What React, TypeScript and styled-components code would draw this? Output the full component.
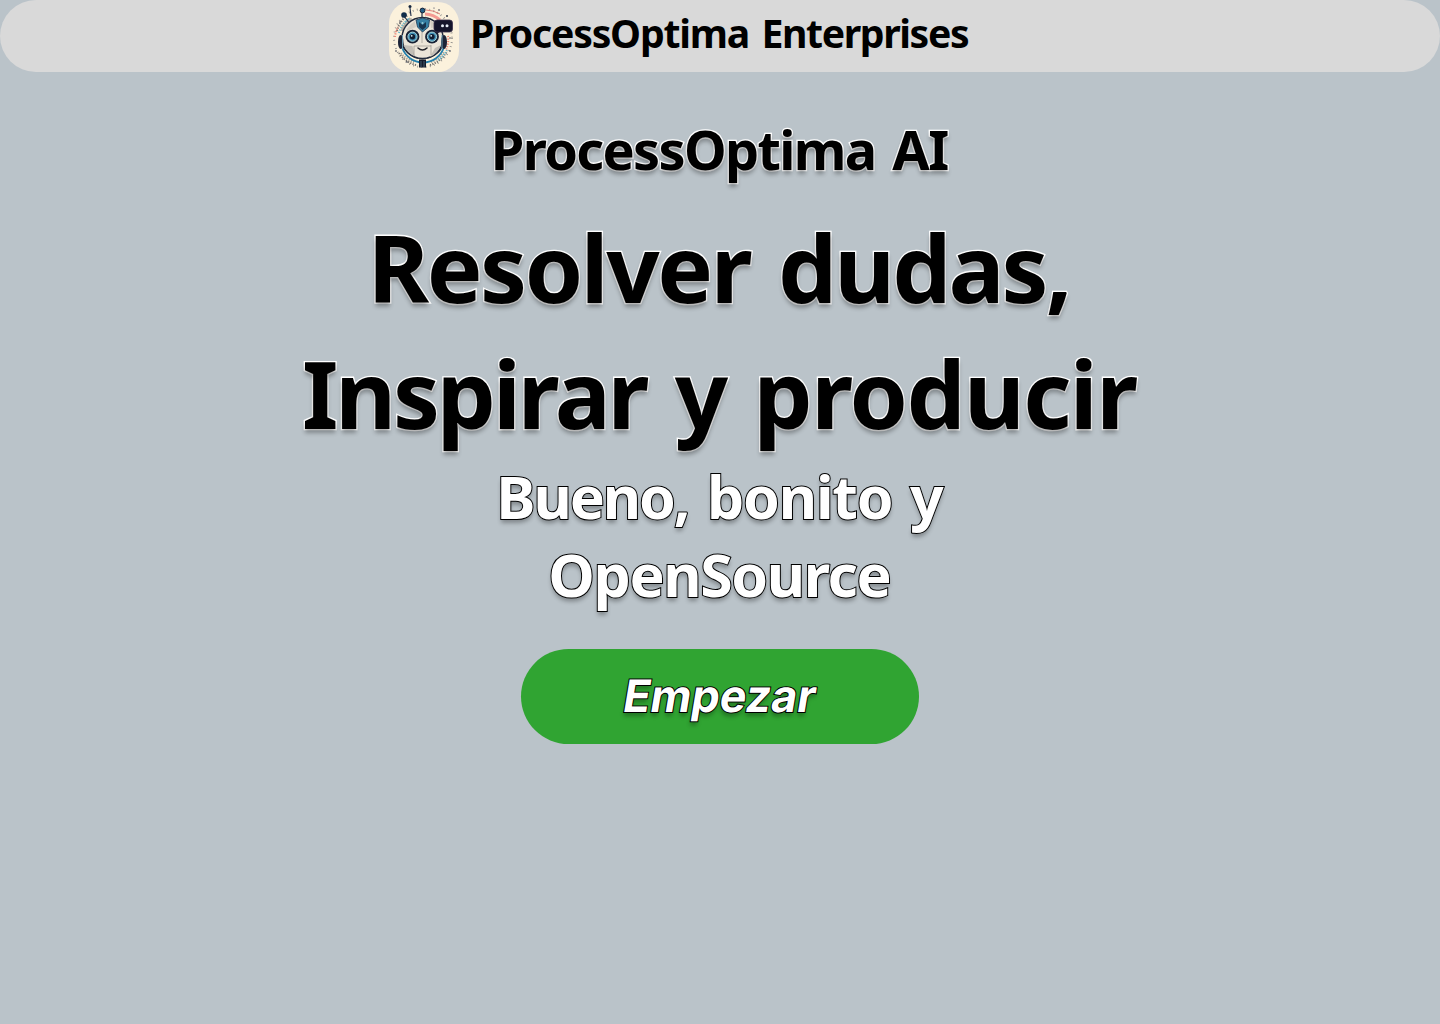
import React from "react";
import styled, { createGlobalStyle } from "styled-components";

const GlobalStyle = createGlobalStyle`
  * { box-sizing: border-box; }
  body { margin: 0; background: #bac3c9; }
`;

const Page = styled.main`
  display: flex;
  flex-direction: column;
  align-items: center;
  width: 1440px;
  height: 1024px;
  overflow: hidden;
  font-family: "Noto Sans", "Open Sans", sans-serif;
  font-weight: 740;
  color: #000;
`;

const Header = styled.header`
  display: flex;
  align-items: flex-start;
  width: 100%;
  height: 72px;
  padding: 2px 0 0 389px;
  gap: 11px;
  border-radius: 36px;
  background: #d9d9d9;
`;

const LogoFrame = styled.svg`
  flex: none;
  width: 70px;
  height: 70px;
`;

const Brand = styled.span`
  font-size: 39.2px;
  line-height: 62px;
  word-spacing: 1px;
  white-space: nowrap;
`;

const Word = styled.span<{ $tracking: number }>`
  letter-spacing: ${(p) => p.$tracking}px;
  margin-right: ${(p) => -p.$tracking}px;
`;

const Line = styled.span<{ $size: number; $height: number; $light?: boolean }>`
  display: block;
  font-size: ${(p) => p.$size}px;
  line-height: ${(p) => p.$height}px;
  word-spacing: 1px;
  color: ${(p) => (p.$light ? "#fff" : "#000")};
  -webkit-text-stroke: ${(p) => (p.$light ? "2px #000" : "2.6px #fff")};
  paint-order: stroke fill;
  text-shadow: 0 4px 4px rgba(0, 0, 0, 0.3);
  white-space: nowrap;
`;

const Product = styled.h2`
  margin: 41px 0 0;
  font-weight: inherit;
`;

const Title = styled.h1`
  margin: 19px 0 0;
  font-weight: inherit;
  text-align: center;
`;

const Tagline = styled.p`
  margin: 1px 0 0;
  text-align: center;
`;

const StartButton = styled.button`
  display: flex;
  align-items: center;
  justify-content: center;
  width: 398px;
  height: 95px;
  margin-top: 36px;
  padding: 0 0 2px;
  border: 0;
  border-radius: 48px;
  background: #30a432;
  font-family: Inter, sans-serif;
  font-weight: 700;
`;

const Slanted = styled.span`
  display: block;
  transform: skewX(-9.4deg);
`;

function RobotLogo() {
  return (
    <LogoFrame viewBox="0 0 70 70" fill="none">
      <rect width="70" height="70" rx="21" fill="#fbf1dc" />
      <g strokeDasharray="1.2 1.3" strokeWidth="2">
        <circle cx="34" cy="36" r="29" stroke="#8c8b88" strokeDasharray="0.8 3.4" />
        <path d="M8 29a27 27 0 0 1 11-16M10 51a29 29 0 0 0 17 12M41 63a28 28 0 0 0 17-14" stroke="#77736f" />
        <path d="M12 26a26 26 0 0 1 10-10M12 51a27 27 0 0 0 13 9M42 60a27 27 0 0 0 13-10" stroke="#a89f91" />
        <path d="M6 35a28 28 0 0 1 3-10M59 34a26 26 0 0 1-2 14" stroke="#ee8b7b" />
        <path d="M10 31a25 25 0 0 1 7-12M58 48a26 26 0 0 1-9 10" stroke="#6cbbd0" />
      </g>
      <path d="M36 12a25 25 0 0 1 15 6" stroke="#f49a92" strokeWidth="3" />
      <path d="M37 8a30 30 0 0 1 14 4" stroke="#df8279" />
      <path d="M36 15a22 22 0 0 1 10 5" stroke="#8aa9b4" />
      <path d="M14 24l5-8 5 2-6 9z" fill="#65adc1" />
      <path d="M13 29a26 26 0 0 1 10-12" stroke="#b6aea4" strokeWidth="3" />
      <path d="M13 45a22 22 0 0 0 42 0" stroke="#2580ad" strokeWidth="1.8" />
      <path d="M13 42a22 22 0 0 0 41 1" stroke="#172034" strokeWidth="1.5" />
      <path d="M33 9v9M15 14l6 8M21 6l1 8" stroke="#29364f" strokeWidth="1.2" />
      <circle cx="33.5" cy="8.5" r="2.4" fill="#235f87" stroke="#182137" />
      <circle cx="15" cy="13" r="2.8" fill="#102c49" />
      <circle cx="21" cy="4.5" r="1.5" fill="#14243d" />
      <g fill="#2c3347">
        <circle cx="58" cy="14" r="1" /><circle cx="50" cy="8" r=".8" />
        <circle cx="11" cy="20" r=".8" /><circle cx="61" cy="49" r=".8" />
        <circle cx="7" cy="49" r=".8" /><circle cx="18" cy="60" r=".8" />
        <circle cx="45" cy="6" r=".6" /><circle cx="61" cy="36" r=".7" />
      </g>
      <circle cx="33.5" cy="36" r="20.5" fill="#ece5d9" stroke="#222a3c" strokeWidth="1.4" />
      <path d="M14.5 43a20 20 0 0 0 11 11l-2-10zM41 55a20 20 0 0 0 11-12l-6 3z" fill="#c3beb6" />
      <path d="M18 27a20 20 0 0 1 8-8l1 6-9 4zM41 18a20 20 0 0 1 8 7l-7 1z" fill="#d4cec3" />
      <path d="M25 44v10M42 43v10M25 44h17M33 29v12" stroke="#98938c" strokeWidth=".7" />
      <path d="M27 18l6.5-2 7 2-1 7-6 5-5-5z" fill="#357fa3" stroke="#1e3a55" strokeWidth=".8" />
      <path d="M30 20l3.5 3 3.5-3v5l-3.5 3-3.5-3z" fill="#18354f" />
      <circle cx="33.5" cy="21" r="1" fill="#93cad8" />
      <ellipse cx="11.7" cy="40" rx="2.7" ry="7" fill="#1d2437" />
      <path d="M13.5 33v14" stroke="#6c9bb2" />
      <ellipse cx="55" cy="40" rx="3" ry="7" fill="#1d2437" />
      <path d="M53 33v14" stroke="#6c9bb2" />
      {[23.5, 43].map((x) => (
        <g key={x}>
          <circle cx={x} cy="34.7" r="6.9" fill="#172135" />
          <circle cx={x} cy="34.7" r="4.6" fill="#3f8fb6" stroke="#a7d3da" strokeWidth="1" />
          <circle cx={x} cy="34.7" r="2.7" fill="#111d31" />
          <circle cx={x - 0.8} cy="33.8" r=".9" fill="#d7eff0" />
        </g>
      ))}
      <path d="M29 46q4.5 4 9 0" stroke="#23232b" strokeWidth="1.5" strokeLinecap="round" />
      <path d="M30 57.5h7v8h-7z" fill="#151b2b" />
      <path d="M32 59v6M35 59v6" stroke="#526c80" strokeWidth=".8" />
      <path d="M47 29h5l-4 3z" fill="#16162a" />
      <rect x="45" y="18" width="18.5" height="12" rx="3" fill="#15152b" stroke="#3b314b" strokeWidth=".8" />
      <circle cx="53.5" cy="23.7" r="1.5" fill="#e7edf6" />
      <circle cx="58" cy="23.7" r="1.5" fill="#e7edf6" />
    </LogoFrame>
  );
}

export default function App() {
  return (
    <Page>
      <GlobalStyle />
      <Header>
        <RobotLogo />
        <Brand>
          <Word $tracking={-1.2}>ProcessOptima</Word> <Word $tracking={-1.4}>Enterprises</Word>
        </Brand>
      </Header>
      <Product>
        <Line $size={54} $height={72}>
          <Word $tracking={-1.65}>ProcessOptima</Word> <Word $tracking={-1.4}>AI</Word>
        </Line>
      </Product>
      <Title>
        <Line $size={93.6} $height={126}>
          <Word $tracking={-2.4}>Resolver</Word> <Word $tracking={-2.9}>dudas,</Word>
        </Line>
        <Line $size={93.6} $height={126}>
          <Word $tracking={-3.1}>Inspirar</Word> <Word $tracking={0}>y</Word> <Word $tracking={-1.6}>producir</Word>
        </Line>
      </Title>
      <Tagline>
        <Line $size={59} $height={78} $light>
          <Word $tracking={-2.1}>Bueno,</Word> <Word $tracking={-1.2}>bonito</Word> <Word $tracking={0}>y</Word>
        </Line>
        <Line $size={59} $height={78} $light>
          <Word $tracking={-1.4}>OpenSource</Word>
        </Line>
      </Tagline>
      <StartButton>
        <Slanted>
          <Line $size={44.8} $height={58} $light>Empezar</Line>
        </Slanted>
      </StartButton>
    </Page>
  );
}
